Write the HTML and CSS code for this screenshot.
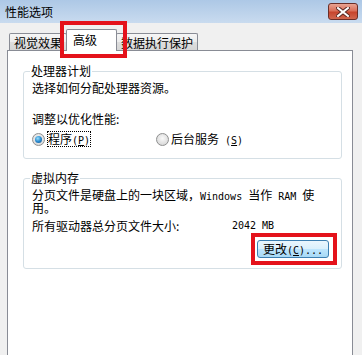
FILE: index.html
```html
<!DOCTYPE html>
<html lang="zh-CN">
<head>
    <meta charset="UTF-8">
    <meta name="viewport" content="width=device-width, initial-scale=1.0">
    <title>性能选项</title>
    <link rel="stylesheet" href="styles.css">
</head>
<body>
    <div class="titlebar">
        <span class="title">性能选项</span>
        <span class="close">
            <svg width="14" height="10" viewBox="0 0 14 10">
                <path d="M2 1 L12 9 M12 1 L2 9" stroke="#5a2a24" stroke-width="4" stroke-linecap="square"/>
                <path d="M2 1 L12 9 M12 1 L2 9" stroke="#fff" stroke-width="2" stroke-linecap="square"/>
            </svg>
        </span>
    </div>

    <div class="content">
        <ul class="tabs">
            <li class="tab">视觉效果</li>
            <li class="tab active mark-tab">高级</li>
            <li class="tab">数据执行保护</li>
        </ul>

        <div class="panel">
            <fieldset class="group">
                <legend>处理器计划</legend>
                <p class="desc">选择如何分配处理器资源。</p>
                <p class="label">调整以优化性能:</p>
                <div class="options">
                    <label class="option first">
                        <span class="radio checked"></span>
                        <span class="focus">程序<span class="en">(<u>P</u>)</span></span>
                    </label>
                    <label class="option">
                        <span class="radio"></span>
                        <span>后台服务<span class="en"> (<u>S</u>)</span></span>
                    </label>
                </div>
            </fieldset>

            <fieldset class="group">
                <legend>虚拟内存</legend>
                <p class="wrap">分页文件是硬盘上的一块区域，<span class="en">Windows </span>当作<span class="en"> RAM </span>使<br>用。</p>
                <p class="size">
                    <span class="size-label">所有驱动器总分页文件大小:</span>
                    <span class="en">2042 MB</span>
                </p>
                <div class="actions">
                    <span class="mark-btn">
                        <button type="button" class="btn">更改<span class="en">(<u>C</u>)...</span></button>
                    </span>
                </div>
            </fieldset>
        </div>
    </div>
</body>
</html>
```

FILE: styles.css
```css
body {
    margin: 0;
    width: 362px;
    height: 355px;
    overflow: hidden;
    background-color: #f0f0f0;
    font-family: "Noto Sans CJK SC", "Liberation Sans", sans-serif;
    font-size: 12px;
    color: #000;
}

p {
    margin: 0;
}

.en {
    font-family: "DejaVu Sans Mono", "Liberation Mono", monospace;
    font-size: 10px;
    line-height: 10px;
}

/* title bar */
.titlebar {
    height: 23px;
    display: flex;
    align-items: center;
    justify-content: space-between;
    padding: 0 4px 0 5px;
    background: linear-gradient(#adc8e6, #c9dbef);
}

.title {
    line-height: 14px;
}

.close {
    width: 28px;
    height: 15px;
    display: flex;
    align-items: center;
    justify-content: center;
    border: 1px solid #6b2e27;
    border-radius: 3px;
    background: linear-gradient(#e9a392, #d9705a 45%, #c7452d 55%, #d0674f);
}

/* tabs */
.content {
    padding-left: 7px;
}

.tabs {
    list-style-type: none;
    margin: 0 0 -1px 0;
    padding: 0 0 0 2px;
    height: 28px;
    display: flex;
    align-items: flex-end;
    position: relative;
    z-index: 1;
}

.tab {
    height: 17px;
    margin-bottom: 1px;
    padding: 0 4px;
    line-height: 17px;
    border: 1px solid #898c95;
    border-bottom: none;
    border-radius: 2px 2px 0 0;
    background: linear-gradient(#f6f6f6, #ececec 50%, #dedede 51%, #d6d6d6);
    box-sizing: border-box;
    white-space: nowrap;
}

.tab + .tab {
    margin-left: -1px;
}

.tab.active {
    height: 22px;
    margin-bottom: 0;
    padding: 0 19px 0 6px;
    line-height: 20px;
    background: #fff;
}

.mark-tab {
    position: relative;
}

.mark-tab::after {
    content: "";
    position: absolute;
    top: -9px;
    left: -7px;
    right: -11px;
    bottom: -7px;
    border: 4px solid #e4121b;
}

/* panel */
.panel {
    width: 346px;
    height: 320px;
    box-sizing: border-box;
    padding: 0 10px 0 15px;
    background-color: #fff;
    border: 1px solid #898c95;
}

.group {
    margin: 13px 0 0 0;
    padding: 0 8px 11px 8px;
    border: 1px solid #d5dfe5;
    border-radius: 3px;
    min-width: 0;
}

.group + .group {
    margin-top: 12px;
    padding-bottom: 10px;
}

.group legend {
    padding: 0 1px;
    margin-left: -2px;
    line-height: 14px;
}

.desc {
    margin-top: 3px;
    line-height: 14px;
}

.label {
    margin-top: 17px;
    line-height: 14px;
}

.options {
    margin-top: 5px;
    height: 16px;
    display: flex;
    align-items: center;
}

.option {
    display: flex;
    align-items: center;
    gap: 2px;
    line-height: 14px;
}

.option.first {
    width: 124px;
}

.radio {
    width: 13px;
    height: 13px;
    box-sizing: border-box;
    border-radius: 50%;
    border: 1px solid #8e8f8f;
    background: radial-gradient(circle at 50% 40%, #f9f9f9, #dcdcdc 70%, #c9c9c9);
    display: flex;
    align-items: center;
    justify-content: center;
}

.radio.checked::after {
    content: "";
    width: 7px;
    height: 7px;
    border-radius: 50%;
    background: radial-gradient(circle at 40% 35%, #9be0fb, #2a8bd0 50%, #104b82);
}

.focus {
    border: 1px dotted #000;
    line-height: 14px;
}

.wrap {
    margin-top: 4px;
    line-height: 12px;
}

.size {
    margin-top: 5px;
    line-height: 14px;
    display: flex;
    align-items: center;
}

.size-label {
    width: 200px;
}

.actions {
    margin-top: 7px;
    display: flex;
    justify-content: flex-end;
    padding-right: 4px;
}

.mark-btn {
    position: relative;
    display: inline-flex;
}

.mark-btn::after {
    content: "";
    position: absolute;
    top: -7px;
    left: -6px;
    right: -8px;
    bottom: -7px;
    border: 4px solid #e4121b;
}

.btn {
    width: 72px;
    height: 18px;
    padding: 0;
    font-family: inherit;
    font-size: 12px;
    line-height: 14px;
    color: #000;
    border: 1px solid #3c7fb1;
    border-radius: 3px;
    background: linear-gradient(#eaf6fd, #d9f0fc 50%, #bee6fd 51%, #a7d9f5);
}
```
